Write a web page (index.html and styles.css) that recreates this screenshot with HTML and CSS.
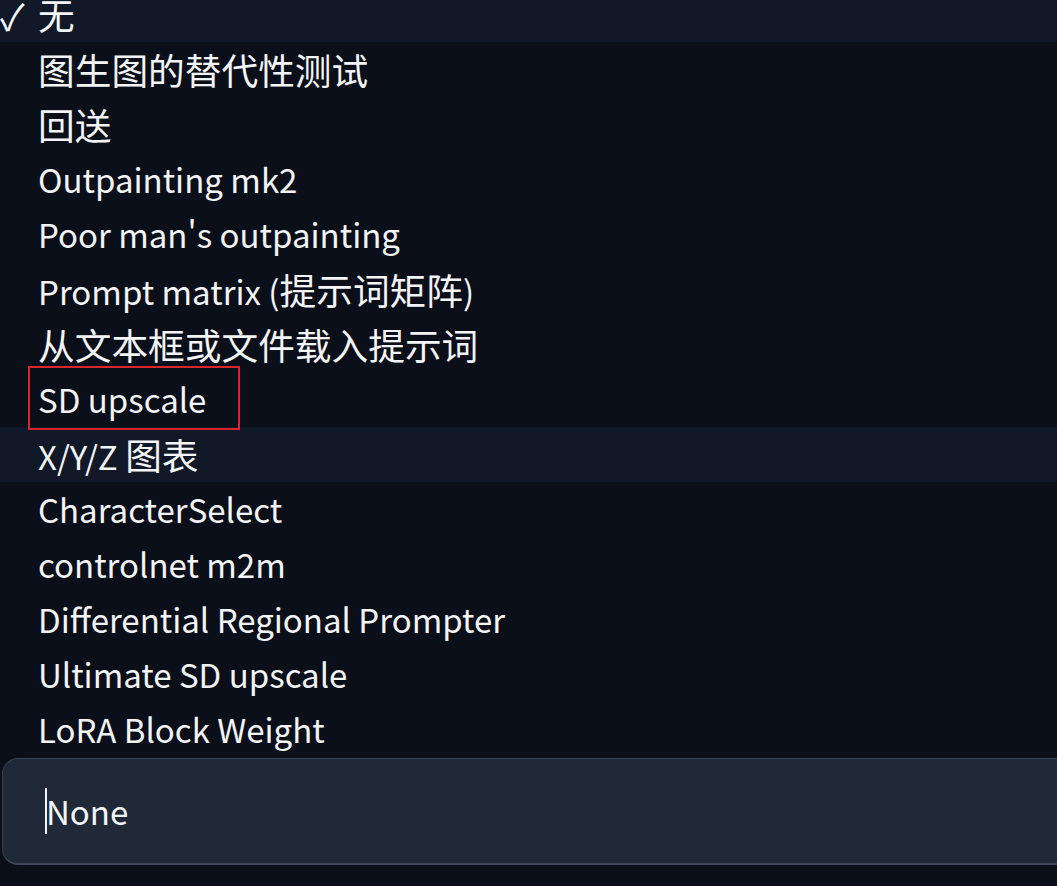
FILE: index.html
```html
<!DOCTYPE html>
<html lang="zh">
<head>
<meta charset="utf-8">
<link rel="stylesheet" href="styles.css">
</head>
<body>
<div class="page">
  <ul class="options">
    <li class="opt selected"><span class="check">✓</span><span class="label"><span class="cjk">无</span></span></li>
    <li class="opt"><span class="check"></span><span class="label"><span class="cjk">图生图的替代性测试</span></span></li>
    <li class="opt"><span class="check"></span><span class="label"><span class="cjk">回送</span></span></li>
    <li class="opt"><span class="check"></span><span class="label">Outpainting mk2</span></li>
    <li class="opt"><span class="check"></span><span class="label">Poor man's outpainting</span></li>
    <li class="opt"><span class="check"></span><span class="label">Prompt matrix (<span class="cjk">提示词矩阵</span>)</span></li>
    <li class="opt"><span class="check"></span><span class="label"><span class="cjk">从文本框或文件载入提示词</span></span></li>
    <li class="opt"><span class="check"></span><span class="label marked">SD upscale</span></li>
    <li class="opt active"><span class="check"></span><span class="label">X/Y/Z <span class="cjk">图表</span></span></li>
    <li class="opt"><span class="check"></span><span class="label">CharacterSelect</span></li>
    <li class="opt"><span class="check"></span><span class="label">controlnet m2m</span></li>
    <li class="opt"><span class="check"></span><span class="label">Differential Regional Prompter</span></li>
    <li class="opt"><span class="check"></span><span class="label">Ultimate SD upscale</span></li>
    <li class="opt"><span class="check"></span><span class="label">LoRA Block Weight</span></li>
  </ul>
  <div class="input"><span class="caret"></span><span class="value">None</span></div>
</div>
</body>
</html>
```
FILE: styles.css
```css
html, body {
  margin: 0;
  padding: 0;
  background: #0b0f19;
  overflow: hidden;
}
.page {
  width: 1057px;
  height: 886px;
  font-family: "Noto Sans CJK SC", "Noto Sans", sans-serif;
  color: #f3f4f6;
}
.options {
  list-style: none;
  margin: -13px 0 0 0;
  padding: 0;
}
.opt {
  height: 55px;
  display: flex;
  align-items: center;
  font-size: 33px;
  line-height: 1;
}
.opt.selected, .opt.active {
  background: #111827;
}
.check {
  width: 38px;
  flex: none;
  box-sizing: border-box;
  padding-left: 0;
  font-size: 36px;
  font-family: "Noto Sans CJK SC", "DejaVu Sans", sans-serif;
  line-height: 1;
}
.label {
  white-space: nowrap;
}
.cjk {
  font-size: 36.7px;
}
.label.marked {
  position: relative;
}
.label.marked::after {
  content: "";
  position: absolute;
  left: -10px;
  top: -17px;
  width: 208px;
  height: 60px;
  border: 2px solid #d9262c;
}
.input {
  margin: 1px -20px 0 2px;
  height: 107px;
  box-sizing: border-box;
  background: #1f2937;
  border: 1px solid #374151;
  border-bottom: 2px solid #3f4758;
  border-radius: 16px;
  display: flex;
  align-items: center;
  padding-left: 42px;
  font-size: 33px;
}
.caret {
  width: 2px;
  height: 46px;
  background: #f3f4f6;
  margin-right: -1px;
}
```
